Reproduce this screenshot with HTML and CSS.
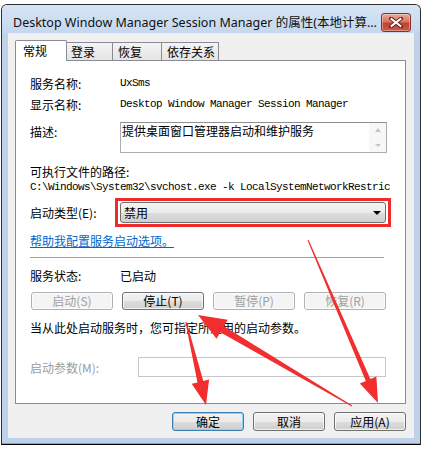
FILE: index.html
```html
<!DOCTYPE html>
<html lang="zh-CN">
<head>
<meta charset="utf-8">
<title>Desktop Window Manager Session Manager 的属性</title>
<link rel="stylesheet" href="styles.css">
</head>
<body>
<div class="window">
  <div class="titlebar">
    <span class="title">Desktop Window Manager Session Manager 的属性(本地计算...</span>
    <div class="close">
      <svg width="14" height="11" viewBox="0 0 14 11">
        <path d="M2 1.5 L12 9.5 M12 1.5 L2 9.5" stroke="#5a1a14" stroke-width="3.6" stroke-linecap="square"/>
        <path d="M2.5 2 L11.5 9 M11.5 2 L2.5 9" stroke="#ffffff" stroke-width="2" stroke-linecap="square"/>
      </svg>
    </div>
  </div>
  <div class="client">
    <div class="tabs">
      <div class="tab active">常规</div>
      <div class="tab t2">登录</div>
      <div class="tab t3">恢复</div>
      <div class="tab t4">依存关系</div>
    </div>
    <div class="panel">
      <div class="row r1"><span class="label">服务名称:</span><span class="mono">UxSms</span></div>
      <div class="row r2"><span class="label">显示名称:</span><span class="mono">Desktop Window Manager Session Manager</span></div>
      <div class="row r3">
        <span class="label">描述:</span>
        <div class="desc">
          <div class="desc-text">提供桌面窗口管理器启动和维护服务</div>
          <div class="vscroll"><span class="up"></span><span class="down"></span></div>
        </div>
      </div>
      <div class="line r4">可执行文件的路径:</div>
      <div class="path mono">C:\Windows\System32\svchost.exe -k LocalSystemNetworkRestric</div>
      <div class="row r5">
        <span class="label lbl85">启动类型(E):</span>
        <div class="redbox">
          <div class="combo"><span>禁用</span><span class="caret"></span></div>
        </div>
      </div>
      <div class="line link">帮助我配置服务启动选项。</div>
      <div class="sep"></div>
      <div class="row r7"><span class="label">服务状态:</span><span>已启动</span></div>
      <div class="btnrow">
        <div class="btn disabled">启动(S)</div>
        <div class="btn">停止(T)</div>
        <div class="btn disabled">暂停(P)</div>
        <div class="btn disabled">恢复(R)</div>
      </div>
      <div class="line hint">当从此处启动服务时，您可指定所适用的启动参数。</div>
      <div class="row r9">
        <span class="label lbl108 grey">启动参数(M):</span>
        <div class="input"></div>
      </div>
    </div>
    <div class="footer">
      <div class="btn fbtn default">确定</div>
      <div class="btn fbtn">取消</div>
      <div class="btn fbtn">应用(A)</div>
    </div>
  </div>
</div>
<svg class="arrows" width="423" height="457" viewBox="0 0 423 457">
  <polygon fill="#f12f2f" points="307.5,240.2 365.8,381 359.8,383.6 378,403 376.4,376.4 370.4,379 308.5,239.8"/>
  <polygon fill="#f12f2f" points="352.25,405.6 223.9,326.2 227.7,319.7 198,315 216.5,338.7 220.3,332.2 351.75,406.4"/>
  <polygon fill="#f12f2f" points="185.4,322.1 197.5,382.4 191.7,383.8 206,405 209.1,379.6 203.3,381 186.6,321.9"/>
</svg>
</body>
</html>
```
FILE: styles.css
```css
* { box-sizing: border-box; }

body {
  margin: 0;
  padding: 4px 0 0 1px;
  width: 423px;
  height: 457px;
  overflow: hidden;
  position: relative;
  background: #ffffff;
  font-family: "Noto Sans CJK SC", sans-serif;
  font-size: 12px;
  color: #000;
}

.window {
  width: 420px;
  height: 441px;
  border: 1px solid #2e2e2e;
  border-bottom-color: #000;
  border-radius: 6px 6px 0 0;
  background: #bed2ea;
  display: flex;
  flex-direction: column;
  padding-bottom: 6px;
  box-shadow: inset 0 -1px 0 #55b8d8;
}

.titlebar {
  height: 28px;
  flex: none;
  display: flex;
  align-items: center;
  justify-content: space-between;
  padding: 8px 9px 1px 11px;
  background: linear-gradient(#d7e5f5, #c4d7ee);
  border-radius: 5px 5px 0 0;
}

.title {
  font-family: "Noto Sans", "Noto Sans CJK SC", sans-serif;
  font-size: 12.5px;
  line-height: 16px;
  white-space: nowrap;
  color: #111;
}

.close {
  width: 30px;
  height: 19px;
  border: 1px solid #8b2f26;
  border-radius: 3px;
  background: linear-gradient(#e9a897 0%, #d97564 45%, #c2432f 55%, #cc5a45 100%);
  display: flex;
  align-items: center;
  justify-content: center;
  box-shadow: inset 0 0 0 1px rgba(255,255,255,0.35);
}

.client {
  margin: 0 6px;
  height: 405px;
  flex: none;
  background: #f0f0f0;
  padding: 7px 8px 7px 7px;
  display: flex;
  flex-direction: column;
}

.tabs {
  display: flex;
  align-items: flex-end;
  height: 20px;
  position: relative;
  z-index: 2;
}

.tab {
  height: 18px;
  line-height: 17px;
  border: 1px solid #898c95;
  border-bottom: none;
  background: linear-gradient(#f4f4f4, #e4e4e4);
  padding-left: 4px;
  margin-left: -1px;
  white-space: nowrap;
}

.tab.active {
  height: 21px;
  margin-left: 0;
  margin-bottom: -1px;
  background: #ffffff;
  width: 52px;
  padding-left: 7px;
  line-height: 19px;
  position: relative;
  z-index: 3;
  border-radius: 2px 2px 0 0;
}

.tab.t2 { width: 47px; }
.tab.t3 { width: 50px; padding-left: 5px; }
.tab.t4 { width: 58px; padding-left: 5px; }

.panel {
  height: 344px;
  flex: none;
  border: 1px solid #898c95;
  background: #ffffff;
  padding: 12px 0 0 14px;
}

.row {
  display: flex;
  align-items: center;
}

.label {
  width: 90px;
  flex: none;
  white-space: nowrap;
}

.lbl85 { width: 85px; }
.lbl108 { width: 108px; }
.grey { color: #9c9c9c; }

.mono {
  font-family: "Liberation Mono", "Noto Sans CJK SC", monospace;
  font-size: 11px;
  letter-spacing: -0.6px;
  white-space: nowrap;
}

.r1 { height: 20px; }
.r2 { height: 20px; margin-top: 1px; }

.r3 {
  margin-top: 8px;
  align-items: flex-start;
  line-height: 20px;
}

.desc {
  width: 267px;
  height: 31px;
  border: 1px solid #abadb3;
  border-top-color: #8e8f8f;
  display: flex;
  background: #fff;
}

.desc-text {
  flex: 1;
  line-height: 16px;
  padding-left: 1px;
}

.vscroll {
  width: 17px;
  background: #f7f7f7;
  display: flex;
  flex-direction: column;
  align-items: center;
  justify-content: space-between;
  padding: 5px 0 5px 0;
}

.vscroll .up {
  width: 0; height: 0;
  border-left: 3.5px solid transparent;
  border-right: 3.5px solid transparent;
  border-bottom: 4px solid #c4c4c4;
}

.vscroll .down {
  width: 0; height: 0;
  border-left: 3.5px solid transparent;
  border-right: 3.5px solid transparent;
  border-top: 3px solid #c4c4c4;
}

.line { line-height: 16px; height: 16px; white-space: nowrap; }
.r4 { margin-top: 11px; }

.path {
  height: 15px;
  line-height: 15px;
}

.r5 { margin-top: 3px; }

.redbox {
  border: 3px solid #ee2b2b;
  padding: 1px 2px;
}

.combo {
  width: 266px;
  height: 21px;
  border: 1px solid #707070;
  border-radius: 3px;
  background: linear-gradient(#f2f2f2 0%, #ebebeb 50%, #dddddd 51%, #cfcfcf 100%);
  display: flex;
  align-items: center;
  justify-content: space-between;
  padding: 0 4px 0 3px;
  line-height: 16px;
}

.caret {
  width: 0; height: 0;
  border-left: 4px solid transparent;
  border-right: 4px solid transparent;
  border-top: 4px solid #000;
}

.link {
  margin-top: 6px;
  color: #0066cc;
  text-decoration: underline;
}

.sep {
  margin-top: 8px;
  width: 354px;
  height: 1px;
  background: #a0a0a0;
}

.r7 { margin-top: 9px; height: 16px; }

.btnrow {
  margin-top: 9px;
  margin-left: 1px;
  display: grid;
  grid-template-columns: repeat(4, 82px);
  column-gap: 9px;
}

.btn {
  height: 18px;
  border: 1px solid #707070;
  border-radius: 3px;
  background: linear-gradient(#f2f2f2 0%, #ebebeb 50%, #dddddd 51%, #cfcfcf 100%);
  box-shadow: inset 0 0 0 1px rgba(255,255,255,0.7);
  display: flex;
  align-items: center;
  justify-content: center;
  line-height: 16px;
  white-space: nowrap;
}

.btn.disabled {
  border-color: #adb2b5;
  background: #f4f4f4;
  color: #9f9f9f;
}

.hint { margin-top: 10px; }

.r9 { margin-top: 21px; height: 20px; }

.input {
  width: 248px;
  height: 20px;
  border: 1px solid #c4c6c9;
  background: #fff;
}

.footer {
  margin-top: 8px;
  display: flex;
  justify-content: flex-end;
  gap: 9px;
}

.fbtn {
  width: 72px;
  height: 19px;
}

.fbtn.default {
  border-color: #3c7fb1;
  box-shadow: inset 0 0 0 1px #8fd1f3;
}

.arrows {
  position: absolute;
  top: 0;
  left: 0;
  pointer-events: none;
}
```
